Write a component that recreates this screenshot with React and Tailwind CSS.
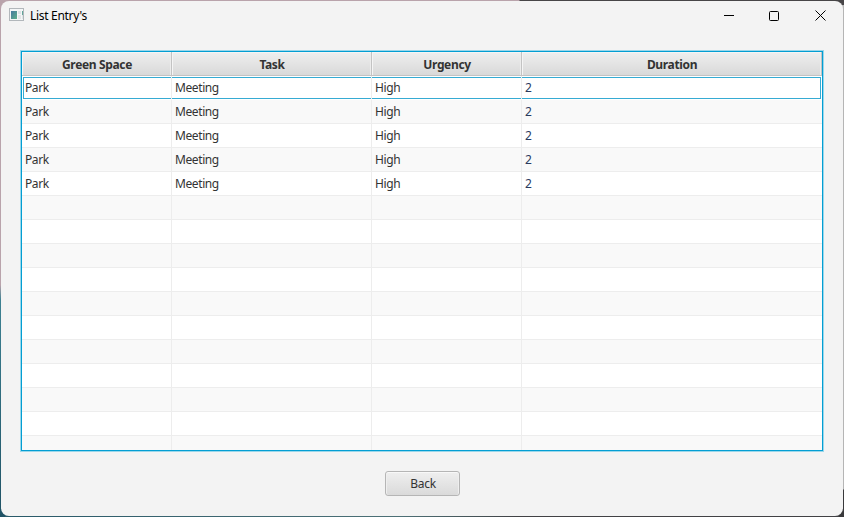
const columns = [
  { title: "Green Space", key: "space" },
  { title: "Task", key: "task" },
  { title: "Urgency", key: "urgency" },
  { title: "Duration", key: "duration" },
];

const entries = Array.from({ length: 5 }, () => ({
  space: "Park",
  task: "Meeting",
  urgency: "High",
  duration: "2",
}));

const rows = Array.from({ length: 16 }, (_, i) => entries[i] || {});

function AppIcon() {
  return (
    <svg className="mb-[2px]" width="15" height="13" viewBox="0 0 15 13" shapeRendering="crispEdges">
      <defs>
        <linearGradient id="pane" x1="0" y1="0" x2="1" y2="1">
          <stop offset="0" stopColor="#4679a0" />
          <stop offset="1" stopColor="#5eb08a" />
        </linearGradient>
      </defs>
      <rect x="0.5" y="0.5" width="14" height="12" fill="#f4f6f7" stroke="#b2b7bb" />
      <rect x="2" y="3" width="6" height="8" fill="url(#pane)" />
      <rect x="9" y="3" width="3" height="3" fill="#dde3e6" />
      <rect x="9" y="7" width="3" height="4" fill="#e3e6e8" />
      <rect x="13" y="3" width="1" height="4" fill="#62a59a" />
      <rect x="13" y="7" width="1" height="4" fill="#e0e4e6" />
    </svg>
  );
}

function TitleBar() {
  return (
    <header className="flex h-[29px] items-center">
      <div className="flex flex-1 items-center pl-2">
        <AppIcon />
        <h1 className="ml-[6px] pt-px text-[12px] leading-4 tracking-[-0.3px] text-black">List Entry's</h1>
      </div>
      <div className="flex h-[28px]">
        <button className="flex w-[46px] items-center justify-center" aria-label="Minimize">
          <svg width="10" height="10"><path d="M0 4.5h10" stroke="#000" /></svg>
        </button>
        <button className="flex w-[44px] items-center justify-center" aria-label="Maximize">
          <svg width="10" height="10"><rect x="0.5" y="0.5" width="9" height="9" rx="1" fill="none" stroke="#000" /></svg>
        </button>
        <button className="flex w-[47px] items-center justify-center pl-px" aria-label="Close">
          <svg width="11" height="11"><path d="M0.5 0.5l10 10M10.5 0.5l-10 10" stroke="#000" /></svg>
        </button>
      </div>
    </header>
  );
}

function Row({ entry, index }) {
  const focused = index === 0;
  return (
    <div
      className={`grid h-6 shrink-0 grid-cols-[150px_200px_150px_300px] ${
        index % 2 ? "bg-[#f9f9f9]" : "bg-white"
      }`}
    >
      {columns.map(({ key }, i) => (
        <div
          key={key}
          className={`flex border-b ${focused ? "border-b-white" : "border-b-[#ededed]"} ${
            i < 3 ? "border-r border-r-[#ededed]" : ""
          }`}
        >
          <div
            className={`mt-px flex h-[22px] flex-1 items-center border-y ${
              focused ? "border-[#36abd3]" : "border-transparent"
            } ${i === 0 ? "ml-px border-l pl-px" : "pl-[3px]"} ${i === 3 ? "mr-px border-r text-[#2b3a5e]" : ""}`}
          >
            {entry[key]}
          </div>
        </div>
      ))}
    </div>
  );
}

function Table() {
  return (
    <div className="mx-[20px] mt-[21px] h-[400px] w-[802px] self-start border border-[#039ed3] bg-white shadow-[0_0_0_1px_#9bd7ea]">
      <div className="flex h-[398px] flex-col overflow-hidden">
        <div className="grid h-6 shrink-0 grid-cols-[150px_200px_150px_300px] font-bold">
          {columns.map(({ title }) => (
            <div
              key={title}
              className="flex items-center justify-center border-r border-b border-[#c3c3c3] bg-linear-to-b from-[#efefef] to-[#d9d9d9] pt-[3px] pl-px tracking-[-0.35px] shadow-[inset_1px_1px_0_#f5f5f5,inset_-1px_0_0_#ececec]"
            >
              {title}
            </div>
          ))}
        </div>
        {rows.map((entry, i) => (
          <Row key={i} entry={entry} index={i} />
        ))}
      </div>
    </div>
  );
}

export default function App() {
  return (
    <div className="h-[517px] w-[844px] overflow-hidden p-px font-['Noto_Sans','Open_Sans',sans-serif] [background:linear-gradient(90deg,#b9a3ab_519px,#474547_520px)_0_0/844px_5px_no-repeat,linear-gradient(#b9a3ab_285px,#3d8192_300px,#1f5265)_0_0/5px_517px_no-repeat,linear-gradient(#b5b5b5_489px,#39393b_490px)_100%_0/5px_517px_no-repeat,linear-gradient(90deg,#285969,#4d7076_400px,#414144_520px)]">
      <main className="flex h-[515px] w-[842px] flex-col rounded-lg bg-[#f3f3f3] text-[12px] tracking-[-0.4px] text-[#333]">
        <TitleBar />
        <Table />
        <div className="mt-[20px] flex justify-center">
          <button className="h-[25px] w-[75px] rounded-[3px] border border-[#b5b5b5] bg-linear-to-b from-[#efefef] to-[#dadada] pl-[2px] tracking-[-0.3px] shadow-[inset_0_1px_0_#f8f8f8,inset_1px_0_0_#eee,inset_-1px_0_0_#eee]">
            Back
          </button>
        </div>
      </main>
    </div>
  );
}
